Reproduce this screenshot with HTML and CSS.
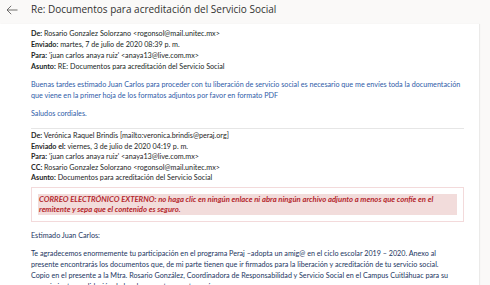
FILE: index.html
```html
<!DOCTYPE html>
<html lang="es">
<head>
<meta charset="utf-8">
<title>Re: Documentos para acreditación del Servicio Social</title>
<link rel="stylesheet" href="styles.css">
</head>
<body>
<header class="top">
  <svg class="back" width="12" height="10" viewBox="0 0 12 10" aria-hidden="true">
    <path d="M11.5 5H1M5.2 0.8L1 5l4.2 4.2" fill="none" stroke="#605e5c" stroke-width="0.9"/>
  </svg>
  <h1 class="subject">Re: Documentos para acreditación del Servicio Social</h1>
</header>
<div class="row">
  <main class="card">
    <div class="hdr first">
      <div><b>De:</b> Rosario Gonzalez Solorzano &lt;rogonsol@mail.unitec.mx&gt;</div>
      <div><b>Enviado:</b> martes, 7 de julio de 2020 08:39 p. m.</div>
      <div><b>Para:</b> 'juan carlos anaya ruiz' &lt;anaya13@live.com.mx&gt;</div>
      <div><b>Asunto:</b> RE: Documentos para acreditación del Servicio Social</div>
    </div>
    <p class="blue">Buenas tardes estimado Juan Carlos para proceder con tu liberación de servicio social es necesario que me envíes toda la documentación<br>que viene en la primer hoja de los formatos adjuntos por favor en formato PDF</p>
    <p class="blue">Saludos cordiales.</p>
    <div class="hdr second">
      <div><b>De:</b> Verónica Raquel Brindis [mailto:veronica.brindis@peraj.org]</div>
      <div><b>Enviado el:</b> viernes, 3 de julio de 2020 04:19 p. m.</div>
      <div><b>Para:</b> 'juan carlos anaya ruiz' &lt;anaya13@live.com.mx&gt;</div>
      <div><b>CC:</b> Rosario Gonzalez Solorzano &lt;rogonsol@mail.unitec.mx&gt;</div>
      <div><b>Asunto:</b> Documentos para acreditación del Servicio Social</div>
    </div>
    <div class="warn">
      <p class="warn-text">CORREO ELECTRÓNICO EXTERNO: no haga clic en ningún enlace ni abra ningún archivo adjunto a menos que confíe en el<br>remitente y sepa que el contenido es seguro.</p>
    </div>
    <p class="navy">Estimado Juan Carlos:</p>
    <p class="navy">Te agradecemos enormemente tu participación en el programa Peraj –adopta un amig@ en el ciclo escolar 2019 – 2020. Anexo al<br>presente encontrarás los documentos que, de mi parte tienen que ir firmados para la liberación y acreditación de tu servicio social.<br>Copio en el presente a la Mtra. Rosario González, Coordinadora de Responsabilidad y Servicio Social en el Campus Cuitláhuac para su<br>conocimiento y validación de los documentos que te envío.</p>
  </main>
  <aside class="rail"></aside>
</div>
</body>
</html>
```

FILE: styles.css
```css
html, body {
  margin: 0;
  padding: 0;
}
body {
  width: 490px;
  height: 285px;
  overflow: hidden;
  background: #faf9f8;
  font-family: Lato, "Open Sans", sans-serif;
  color: #252423;
}
.top {
  height: 24px;
  display: flex;
  align-items: flex-start;
  padding: 2px 0 0 6px;
  box-sizing: border-box;
}
.back {
  margin-top: 3px;
  flex: none;
}
.subject {
  margin: 0 0 0 13px;
  font-family: "Open Sans", sans-serif;
  font-weight: 400;
  font-size: 10px;
  line-height: 14px;
  color: #323130;
  white-space: nowrap;
}
.row {
  display: flex;
  height: 261px;
}
.card {
  flex: 1;
  background: #fff;
  box-shadow: 1px 0 1px rgba(0,0,0,0.06);
  padding: 4px 15px 0 31px;
  font-size: 7.2px;
  line-height: 11px;
  overflow: hidden;
}
.rail {
  width: 11px;
  flex: none;
}
.hdr div, p {
  white-space: nowrap;
}
.hdr b {
  font-weight: 700;
}
.hdr.first {
  color: #201f1e;
}
p {
  margin: 7px 0 0;
}
.blue {
  color: #2f5ca8;
}
.hdr.second {
  margin-top: 9px;
  border-top: 1px solid #e6e6e6;
  padding-top: 2px;
  line-height: 10.6px;
  color: #262626;
}
.warn {
  margin-top: 3px;
  border: 1px solid #f3dadb;
  padding: 6px;
}
.warn-text {
  margin: 0;
  background: #f2dcdb;
  color: #b5282e;
  font-weight: 700;
  font-style: italic;
  font-size: 7.7px;
  line-height: 10.4px;
  padding-left: 1px;
}
.navy {
  color: #23365f;
}
.warn + .navy {
  margin-top: 8px;
}
```
